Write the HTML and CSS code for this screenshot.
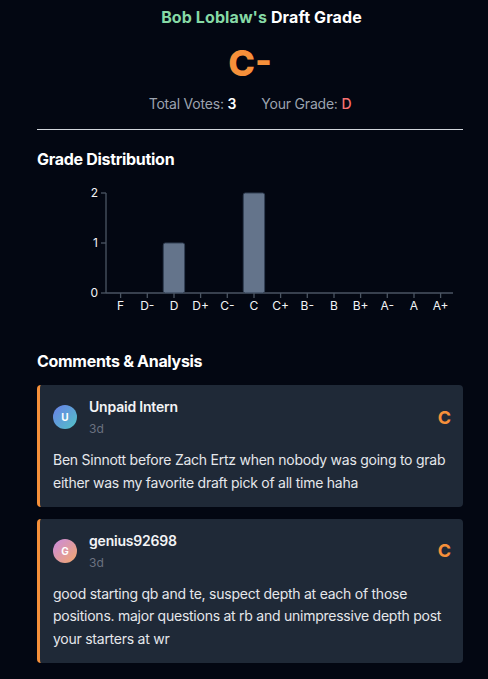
FILE: index.html
```html
<!DOCTYPE html>
<html>
<head>
<meta charset="utf-8">
<link rel="stylesheet" href="styles.css">
</head>
<body>
<div class="page">
  <h1 class="title"><span class="owner">Bob Loblaw's</span> Draft Grade</h1>
  <div class="grade">C-</div>
  <div class="stats">
    <span class="stat">Total Votes: <b class="val">3</b></span>
    <span class="stat">Your Grade: <b class="val red">D</b></span>
  </div>
  <hr class="divider">
  <h2 class="section">Grade Distribution</h2>
  <svg class="chart" width="426" height="135" viewBox="0 0 426 135">
    <g class="axis">
      <line x1="69" y1="10" x2="69" y2="110"/>
      <line x1="64" y1="10" x2="69" y2="10"/>
      <line x1="64" y1="60" x2="69" y2="60"/>
      <line x1="64" y1="110" x2="69" y2="110"/>
      <line x1="69" y1="110" x2="416" y2="110"/>
    </g>
    <g class="ylabels">
      <text x="61" y="14">2</text>
      <text x="61" y="64">1</text>
      <text x="61" y="114">0</text>
    </g>
    <rect class="bar" x="126.3" y="60" width="21.3" height="50" rx="2"/>
    <rect class="bar" x="206.3" y="10" width="21.3" height="100" rx="2"/>
    <g class="axis">
      <line x1="83.6" y1="110" x2="83.6" y2="115"/>
      <line x1="110.3" y1="110" x2="110.3" y2="115"/>
      <line x1="137" y1="110" x2="137" y2="115"/>
      <line x1="163.6" y1="110" x2="163.6" y2="115"/>
      <line x1="190.3" y1="110" x2="190.3" y2="115"/>
      <line x1="217" y1="110" x2="217" y2="115"/>
      <line x1="243.6" y1="110" x2="243.6" y2="115"/>
      <line x1="270.3" y1="110" x2="270.3" y2="115"/>
      <line x1="297" y1="110" x2="297" y2="115"/>
      <line x1="323.6" y1="110" x2="323.6" y2="115"/>
      <line x1="350.3" y1="110" x2="350.3" y2="115"/>
      <line x1="377" y1="110" x2="377" y2="115"/>
      <line x1="403.6" y1="110" x2="403.6" y2="115"/>
    </g>
    <g class="xlabels">
      <text x="83.6" y="127">F</text>
      <text x="110.3" y="127">D-</text>
      <text x="137" y="127">D</text>
      <text x="163.6" y="127">D+</text>
      <text x="190.3" y="127">C-</text>
      <text x="217" y="127">C</text>
      <text x="243.6" y="127">C+</text>
      <text x="270.3" y="127">B-</text>
      <text x="297" y="127">B</text>
      <text x="323.6" y="127">B+</text>
      <text x="350.3" y="127">A-</text>
      <text x="377" y="127">A</text>
      <text x="403.6" y="127">A+</text>
    </g>
  </svg>
  <h2 class="section comments-title">Comments &amp; Analysis</h2>
  <div class="comments">
    <div class="card">
      <div class="card-head">
        <div class="avatar av-blue">U</div>
        <div class="who">
          <div class="name">Unpaid Intern</div>
          <div class="time">3d</div>
        </div>
        <div class="card-grade">C</div>
      </div>
      <p class="text">Ben Sinnott before Zach Ertz when nobody was going to grab either was my favorite draft pick of all time haha</p>
    </div>
    <div class="card">
      <div class="card-head">
        <div class="avatar av-pink">G</div>
        <div class="who">
          <div class="name">genius92698</div>
          <div class="time">3d</div>
        </div>
        <div class="card-grade">C</div>
      </div>
      <p class="text">good starting qb and te, suspect depth at each of those positions. major questions at rb and unimpressive depth post your starters at wr</p>
    </div>
  </div>
</div>
</body>
</html>
```

FILE: styles.css
```css
* { box-sizing: border-box; }
html, body {
  margin: 0;
  padding: 0;
  background: #030712;
}
body {
  font-family: Inter, "Noto Sans", sans-serif;
  color: #f3f4f6;
}
.page {
  padding: 5px 25px 16px 37px;
}
.title {
  margin: 0;
  padding-left: 23px;
  text-align: center;
  font-size: 16px;
  line-height: 24px;
  font-weight: 700;
  letter-spacing: 0.1px;
  color: #ffffff;
}
.owner { color: #86d9a5; }
.grade {
  margin-top: 14px;
  text-align: center;
  font-size: 36px;
  line-height: 40px;
  font-weight: 800;
  color: #f6903a;
}
.stats {
  margin-top: 11px;
  display: flex;
  justify-content: center;
  gap: 25px;
  font-size: 14px;
  line-height: 20px;
  letter-spacing: -0.2px;
  color: #9ca3af;
}
.val { color: #ffffff; font-weight: 600; }
.val.red { color: #f87171; font-weight: 500; }
.divider {
  margin: 15px 0 0;
  border: 0;
  border-top: 1px solid #d1d5db;
}
.section {
  margin: 17px 0 0;
  font-size: 16px;
  line-height: 24px;
  font-weight: 700;
  letter-spacing: -0.3px;
  color: #ffffff;
}
.chart {
  display: block;
  margin-top: 12px;
  font-family: Inter, "Noto Sans", sans-serif;
}
.axis line { stroke: #4b5563; stroke-width: 1.3; }
.ylabels text { fill: #f3f4f6; font-size: 12px; text-anchor: end; }
.xlabels text { fill: #f3f4f6; font-size: 12px; text-anchor: middle; }
.bar { fill: #64748b; stroke: #334155; stroke-width: 1; }
.comments-title { margin-top: 31px; }
.comments {
  margin-top: 12px;
  display: flex;
  flex-direction: column;
  gap: 12px;
}
.card {
  background: #1f2937;
  border-left: 3px solid #f6903a;
  border-radius: 4px;
  padding: 12px 12px 12px 13px;
}
.card-head {
  display: flex;
  align-items: center;
  gap: 12px;
}
.avatar {
  width: 24px;
  height: 24px;
  border-radius: 50%;
  display: flex;
  align-items: center;
  justify-content: center;
  font-size: 10px;
  font-weight: 700;
  color: #ffffff;
}
.av-blue { background: linear-gradient(135deg, #6a7ee8, #52c4c6); }
.av-pink { background: linear-gradient(135deg, #c98ae0, #f3a86a); }
.who { flex: 1; }
.name {
  font-size: 14px;
  line-height: 20px;
  font-weight: 600;
  letter-spacing: -0.2px;
  color: #f3f4f6;
}
.time {
  margin-top: 4px;
  font-size: 12px;
  line-height: 16px;
  color: #6b7280;
}
.card-grade {
  font-size: 18px;
  font-weight: 700;
  color: #f6903a;
}
.text {
  margin: 12px 0 0;
  font-size: 14px;
  line-height: 22.75px;
  letter-spacing: -0.25px;
  color: #e5e7eb;
}
```
